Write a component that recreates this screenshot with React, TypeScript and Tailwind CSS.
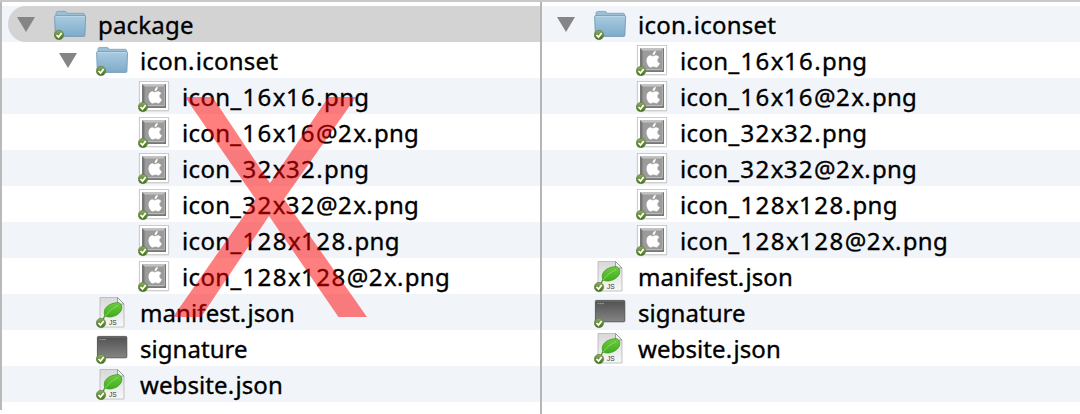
import React from 'react';

type Kind = 'folder' | 'png' | 'json' | 'exec';
type Item = { name: string; kind: Kind; depth: 0 | 1 | 2; tracking: string; selected?: boolean };

const left: Item[] = [
  { name: 'package', kind: 'folder', depth: 0, tracking: 'tracking-[0.2px]', selected: true },
  { name: 'icon.iconset', kind: 'folder', depth: 1, tracking: 'tracking-[0.25px]' },
  { name: 'icon_16x16.png', kind: 'png', depth: 2, tracking: 'tracking-[0.35px]' },
  { name: 'icon_16x16@2x.png', kind: 'png', depth: 2, tracking: 'tracking-[0.3px]' },
  { name: 'icon_32x32.png', kind: 'png', depth: 2, tracking: 'tracking-[0.35px]' },
  { name: 'icon_32x32@2x.png', kind: 'png', depth: 2, tracking: 'tracking-[0.3px]' },
  { name: 'icon_128x128.png', kind: 'png', depth: 2, tracking: 'tracking-[0.35px]' },
  { name: 'icon_128x128@2x.png', kind: 'png', depth: 2, tracking: 'tracking-[0.35px]' },
  { name: 'manifest.json', kind: 'json', depth: 1, tracking: 'tracking-[0.1px]' },
  { name: 'signature', kind: 'exec', depth: 1, tracking: 'tracking-[0.05px]' },
  { name: 'website.json', kind: 'json', depth: 1, tracking: 'tracking-[0.1px]' },
];

const right: Item[] = left.slice(1).map((i) => ({ ...i, depth: (i.depth - 1) as 0 | 1 }));

const indent = ['pl-[15px]', 'pl-[57px]', 'pl-[99px]'];

function Badge() {
  return (
    <g>
      <circle cx="5" cy="29" r="4.7" fill="url(#badge)" stroke="#56752f" strokeWidth="0.6" />
      <path d="M2.5 29l2 2.1 3.2-4.2" fill="none" stroke="#fff" strokeWidth="1.7" />
    </g>
  );
}

function FileIcon({ kind }: { kind: Kind }) {
  return (
    <svg className="h-9 w-9 shrink-0" viewBox="0 0 36 36">
      {kind === 'folder' && (
        <g>
          <path d="M2 11V7.2Q2 5.4 3.6 5.4H11Q12.6 5.4 13 7.3H29.4Q30.6 7.3 30.6 9V13H2z" fill="#9dbfd5" stroke="#7a9fb8" strokeWidth="0.8" />
          <path d="M.6 10.6Q.5 9.7 1.5 9.7H30.7Q31.7 9.7 31.6 10.6L30.9 29.4Q30.8 30.4 29.8 30.4H2.4Q1.4 30.4 1.3 29.4z" fill="url(#folder)" stroke="#6b94b2" strokeWidth="0.8" />
          <path d="M1.5 10.5H30.8" stroke="#c0dced" strokeWidth="0.8" />
        </g>
      )}
      {kind === 'png' && (
        <g>
          <rect x="0.8" y="3" width="30.4" height="30.4" rx="1" fill="#999" opacity="0.35" />
          <rect x="1.5" y="3.6" width="29" height="29" fill="#fff" stroke="#bbb" strokeWidth="0.6" />
          <rect x="4" y="6" width="24" height="24" fill="#8e8e8e" />
          <path d="M4 6h24l-3 3H7v18l-3 3z" fill="#c2c2c2" />
          <path d="M4 6l3 3v18l-3 3z" fill="#777" />
          <path d="M28 30H4l3-3h18V9l3-3z" fill="#777" />
          <rect x="6.5" y="8.5" width="19" height="18.5" fill="#9b9b9b" />
          <path d="M26.2 8v19.7H7" fill="none" stroke="#c8c8c8" strokeWidth="1" />
          <path d="M16.5 14.4c1 0 1.7-.8 3.2-.8 1.4 0 2.6.6 3.4 1.7-2.6 1.5-2.4 4.8.5 6-.7 2.1-2 3.9-3.3 3.9-1.1 0-1.5-.7-2.8-.7s-1.7.7-2.8.7c-2 0-4-3.8-4-6.8 0-3.2 1.9-4.8 3.7-4.8.9 0 1.6.8 2.1.8z" fill="#fff" stroke="#fff" strokeWidth="0.4" />
          <path d="M16.6 13.2c-.1-2.4 1.4-4.1 3.2-4.5.1 2.2-1.2 4.2-3.2 4.5z" fill="#fff" />
        </g>
      )}
      {kind === 'json' && (
        <g>
          <path d="M4 3.5H21.5L28 10V33H4z" fill="url(#paper)" stroke="#b5b5b5" strokeWidth="0.8" />
          <path d="M21.5 3.5V10H28z" fill="#f4f4f4" stroke="#888" strokeWidth="0.8" />
          <path d="M7 26Q8 22 11 19.5" fill="none" stroke="#4c9b28" strokeWidth="1.4" />
          <path d="M9 22C6 15 12 9 22.5 8.5C25.5 10 27 13.5 24.5 17.5C21.5 22 14 24.5 9 22z" fill="url(#leaf)" stroke="#3b9a1f" strokeWidth="0.8" />
          <path d="M9 22Q14 15 22 11.5" fill="none" stroke="#93df68" strokeWidth="0.8" />
          <text x="13" y="31.3" fontFamily="Liberation Sans, sans-serif" fontSize="6.6" fill="#333">JS</text>
        </g>
      )}
      {kind === 'exec' && (
        <g>
          <rect x="1.4" y="6.4" width="29.4" height="21.4" rx="1" fill="url(#exec)" stroke="#464646" strokeWidth="0.8" />
          <path d="M2 7.2H30" stroke="#777" strokeWidth="0.7" />
          <path d="M3.5 9.6H10" stroke="#73bd6b" strokeWidth="1" strokeDasharray="1.8 .6" />
        </g>
      )}
      <Badge />
    </svg>
  );
}

// Digits and separators are set wider than the letters.
function FileName({ name }: { name: string }) {
  return (
    <>
      {name.split(/(\d+|[_.])/).map((part, i) =>
        /^\d+$/.test(part) ? (
          <span key={i} className="tracking-[1.5px]">{part}</span>
        ) : /^[_.]$/.test(part) ? (
          <span key={i} className="tracking-[1.25px]">{part}</span>
        ) : (
          part
        ),
      )}
    </>
  );
}

function Row({ item, index }: { item: Item; index: number }) {
  return (
    <li className={`h-9 ${index % 2 === 0 ? 'bg-[#f1f5fa]' : 'bg-white'}`}>
      <div className={`flex h-9 ${item.selected ? 'ml-[6px] rounded-l-full bg-[#d3d3d3] pl-[9px]' : indent[item.depth]}`}>
        <span className="flex h-9 w-[37px] shrink-0">
          {item.kind === 'folder' && (
            <svg className="mt-[11px] h-[15px] w-[18px]" viewBox="0 0 18 15">
              <path d="M0 0H18L9 15z" fill="#858585" />
            </svg>
          )}
        </span>
        <FileIcon kind={item.kind} />
        <span className={`ml-2 whitespace-nowrap text-2xl leading-[38px] text-black [-webkit-text-stroke:0.35px_black] ${item.tracking}`}>
          <FileName name={item.name} />
        </span>
      </div>
    </li>
  );
}

function Pane({ items }: { items: Item[] }) {
  const blanks = 11 - items.length;
  return (
    <ul className="flex flex-1 flex-col">
      {items.map((item, i) => (
        <Row key={item.name} item={item} index={i} />
      ))}
      {blanks > 0 && <li className="h-9 bg-[#f1f5fa]" />}
    </ul>
  );
}

export default function App() {
  return (
    <main className="relative h-[414px] w-[1080px] overflow-hidden bg-white font-['Noto_Sans',sans-serif]">
      <svg className="absolute h-0 w-0">
        <defs>
          <linearGradient id="folder" x1="0" y1="0" x2="0" y2="1">
            <stop offset="0" stopColor="#a9cce1" />
            <stop offset="1" stopColor="#7fabc9" />
          </linearGradient>
          <linearGradient id="badge" x1="0" y1="0" x2="0" y2="1">
            <stop offset="0" stopColor="#8fac68" />
            <stop offset="1" stopColor="#3f6f14" />
          </linearGradient>
          <linearGradient id="paper" x1="0" y1="0" x2="0" y2="1">
            <stop offset="0" stopColor="#d8d8d8" />
            <stop offset="1" stopColor="#f8f8f8" />
          </linearGradient>
          <linearGradient id="leaf" x1="0" y1="0" x2="0" y2="1">
            <stop offset="0" stopColor="#6dcc3f" />
            <stop offset="1" stopColor="#3fae1c" />
          </linearGradient>
          <linearGradient id="exec" x1="0" y1="0" x2="0" y2="1">
            <stop offset="0" stopColor="#505050" />
            <stop offset="1" stopColor="#858585" />
          </linearGradient>
        </defs>
      </svg>
      <div className="h-[2px] bg-[#c9c9c9]" />
      <div className="flex h-[412px]">
        <div className="h-[408px] w-[2px] bg-[#b9b9b9]" />
        <section className="flex w-[538px] pt-1">
          <Pane items={left} />
        </section>
        <div className="w-[2px] bg-[#b5b5b5]" />
        <section className="flex w-[538px] pt-1">
          <Pane items={right} />
        </section>
      </div>
      <svg className="absolute left-[173px] top-[97px] h-[220px] w-[194px]" viewBox="0 0 194 220">
        <polygon
          points="12,0 39.5,0 97,86 155.5,0 183,0 111,102 194,220 165.5,220 96,119 28,220 0,220 82.5,102"
          fill="#ff0000"
          opacity="0.5"
        />
      </svg>
    </main>
  );
}
